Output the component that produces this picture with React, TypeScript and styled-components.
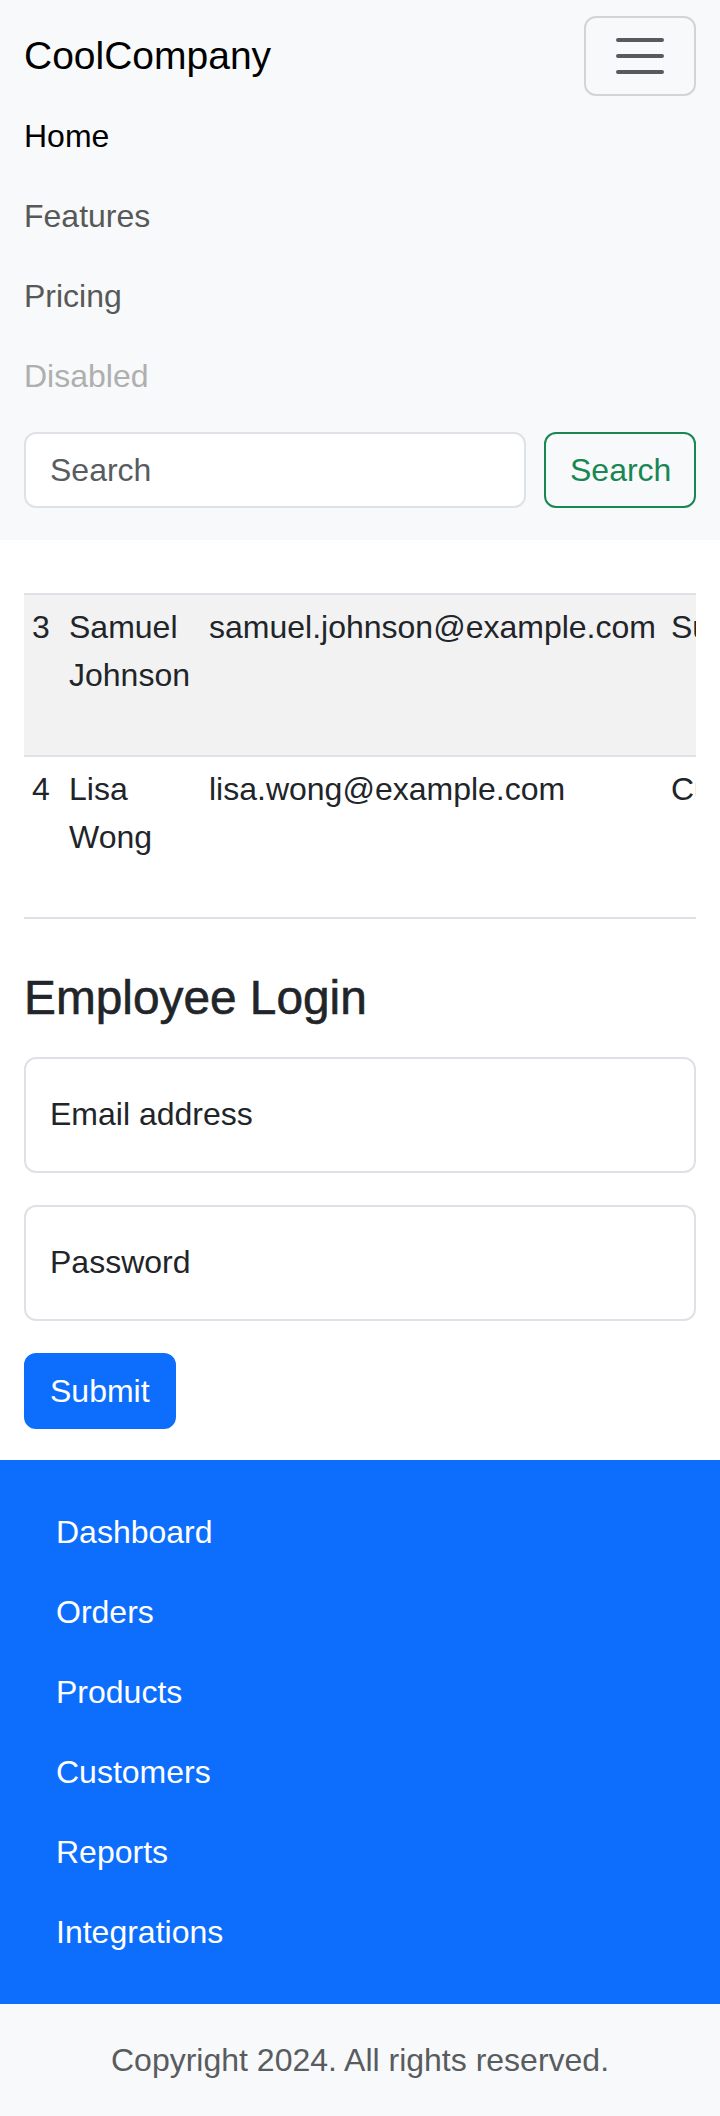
import React from "react";
import styled, { createGlobalStyle } from "styled-components";

const GlobalStyle = createGlobalStyle`
  * { box-sizing: border-box; }
  html, body { margin: 0; padding: 0; }
  body {
    font-family: "Liberation Sans", Arial, Helvetica, sans-serif;
    font-size: 32px;
    line-height: 48px;
    color: #212529;
    background: #ffffff;
  }
`;

const Navbar = styled.nav`
  background: #f8f9fa;
  padding: 16px 24px 32px;
`;

const BrandRow = styled.div`
  display: flex;
  align-items: center;
  justify-content: space-between;
`;

const Brand = styled.a`
  font-size: 39px;
  line-height: 60px;
  padding: 10px 0;
  color: #000;
  text-decoration: none;
`;

const Toggler = styled.button`
  width: 112px;
  height: 80px;
  padding: 8px 24px;
  border: 2px solid rgba(0, 0, 0, 0.15);
  border-radius: 12px;
  background: transparent;
  display: flex;
  align-items: center;
  justify-content: center;
`;

const NavList = styled.ul`
  list-style: none;
  margin: 0 0 16px;
  padding: 0;
  display: flex;
  flex-direction: column;
`;

const NavLink = styled.a<{ $tone: "active" | "normal" | "disabled" }>`
  display: block;
  padding: 16px 0;
  text-decoration: none;
  color: ${(p) =>
    p.$tone === "active" ? "#000" : p.$tone === "disabled" ? "#aeafaf" : "#575858"};
`;

const SearchForm = styled.form`
  display: flex;
  gap: 18px;
`;

const SearchInput = styled.input`
  flex: 1;
  min-width: 0;
  height: 76px;
  padding: 12px 24px;
  font: inherit;
  color: #212529;
  background: #fff;
  border: 2px solid #dee2e6;
  border-radius: 12px;
  &::placeholder { color: #595c5f; }
`;

const OutlineButton = styled.button`
  width: 152px;
  height: 76px;
  padding: 12px 24px;
  font: inherit;
  color: #198754;
  background: transparent;
  border: 2px solid #198754;
  border-radius: 12px;
`;

const Main = styled.main`
  padding: 53px 24px 31px;
`;

const TableWrap = styled.div`
  overflow: hidden;
  margin-bottom: 50px;
`;

const Table = styled.table`
  border-collapse: separate;
  border-spacing: 0;
  table-layout: fixed;
  width: 999px;
`;

const Cell = styled.td<{ $striped?: boolean; $first?: boolean }>`
  padding: 8px;
  vertical-align: top;
  background: ${(p) => (p.$striped ? "#f2f2f2" : "#ffffff")};
  border-bottom: 2px solid #dee2e6;
  border-top: ${(p) => (p.$first ? "2px solid #dee2e6" : "none")};
`;

const NoWrap = styled.div`
  white-space: nowrap;
`;

const TallBlock = styled.div`
  height: 144px;
  overflow: hidden;
`;

const Heading = styled.h2`
  margin: 0 0 29px;
  font-size: 47.8px;
  line-height: 58.7px;
  font-weight: 500;
  -webkit-text-stroke: 0.6px #212529;
  color: #212529;
`;

const LoginForm = styled.form`
  display: flex;
  flex-direction: column;
  align-items: flex-start;
  gap: 32px;
`;

const FloatingInput = styled.input`
  width: 100%;
  height: 116px;
  padding: 0 24px;
  font: inherit;
  color: #212529;
  background: #fff;
  border: 2px solid #dee2e6;
  border-radius: 12px;
  &::placeholder { color: #212529; }
`;

const PrimaryButton = styled.button`
  height: 76px;
  padding: 12px 24px;
  font: inherit;
  color: #fff;
  background: #0d6efd;
  border: 2px solid #0d6efd;
  border-radius: 12px;
`;

const BlueNav = styled.nav`
  background: #0d6efd;
  padding: 32px 24px;
`;

const BlueList = styled.ul`
  list-style: none;
  margin: 0;
  padding: 0;
`;

const BlueLink = styled.a`
  display: block;
  padding: 16px 32px;
  color: #fff;
  text-decoration: none;
`;

const Footer = styled.footer`
  background: #f8f9fa;
  padding: 32px 24px;
  text-align: center;
  color: #595c5f;
`;

const people = [
  { id: 3, name: "Samuel Johnson", email: "samuel.johnson@example.com", role: "Support", note: "Escalations and key accounts", striped: true },
  { id: 4, name: "Lisa Wong", email: "lisa.wong@example.com", role: "Customer", note: "Onboarding for new accounts", striped: false },
];

const links = ["Dashboard", "Orders", "Products", "Customers", "Reports", "Integrations"];

export default function App() {
  return (
    <>
      <GlobalStyle />
      <Navbar>
        <BrandRow>
          <Brand href="#">CoolCompany</Brand>
          <Toggler type="button" aria-label="Toggle navigation">
            <svg width="60" height="60" viewBox="0 0 30 30">
              <path
                d="M4 7h22M4 15h22M4 23h22"
                stroke="rgba(33,37,41,0.75)"
                strokeWidth="2"
                strokeLinecap="round"
                fill="none"
              />
            </svg>
          </Toggler>
        </BrandRow>
        <NavList>
          <li><NavLink href="#" $tone="active">Home</NavLink></li>
          <li><NavLink href="#" $tone="normal">Features</NavLink></li>
          <li><NavLink href="#" $tone="normal">Pricing</NavLink></li>
          <li><NavLink $tone="disabled">Disabled</NavLink></li>
        </NavList>
        <SearchForm onSubmit={(e) => e.preventDefault()}>
          <SearchInput type="search" placeholder="Search" aria-label="Search" />
          <OutlineButton type="submit">Search</OutlineButton>
        </SearchForm>
      </Navbar>

      <Main>
        <TableWrap>
          <Table>
            <colgroup>
              <col style={{ width: 37 }} />
              <col style={{ width: 140 }} />
              <col style={{ width: 462 }} />
              <col style={{ width: 180 }} />
              <col style={{ width: 180 }} />
            </colgroup>
            <tbody>
              {people.map((p, i) => (
                <tr key={p.id}>
                  <Cell $striped={p.striped} $first={i === 0}>{p.id}</Cell>
                  <Cell $striped={p.striped} $first={i === 0}>{p.name}</Cell>
                  <Cell $striped={p.striped} $first={i === 0}>{p.email}</Cell>
                  <Cell $striped={p.striped} $first={i === 0}>
                    <NoWrap>{p.role}</NoWrap>
                  </Cell>
                  <Cell $striped={p.striped} $first={i === 0}>
                    <TallBlock>{p.note}</TallBlock>
                  </Cell>
                </tr>
              ))}
            </tbody>
          </Table>
        </TableWrap>

        <Heading>Employee Login</Heading>
        <LoginForm onSubmit={(e) => e.preventDefault()}>
          <FloatingInput type="email" placeholder="Email address" aria-label="Email address" />
          <FloatingInput type="password" placeholder="Password" aria-label="Password" />
          <PrimaryButton type="submit">Submit</PrimaryButton>
        </LoginForm>
      </Main>

      <BlueNav>
        <BlueList>
          {links.map((l) => (
            <li key={l}><BlueLink href="#">{l}</BlueLink></li>
          ))}
        </BlueList>
      </BlueNav>

      <Footer>Copyright 2024. All rights reserved.</Footer>
    </>
  );
}
